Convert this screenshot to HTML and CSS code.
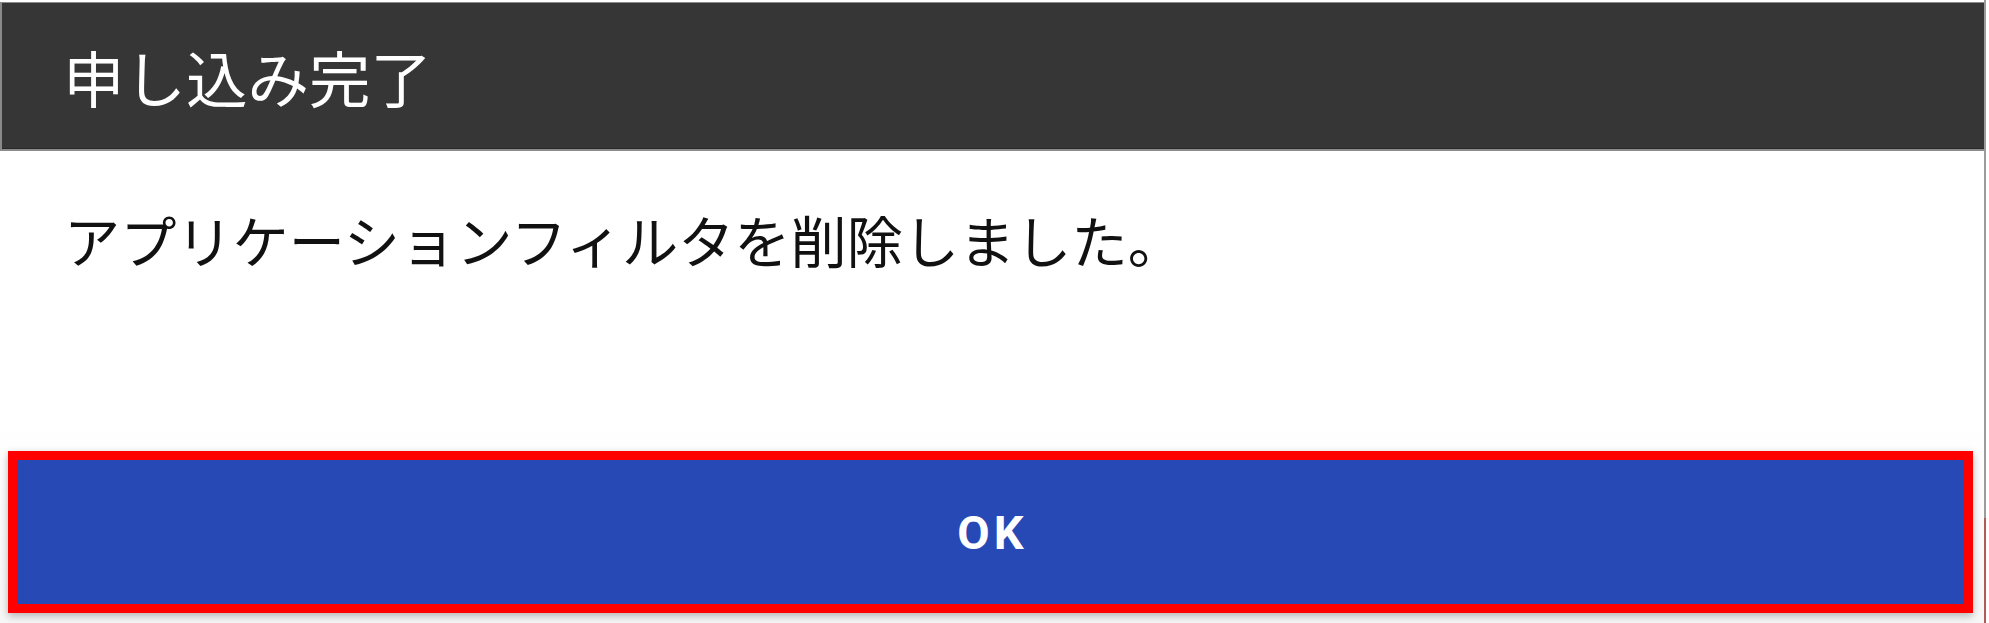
FILE: index.html
```html
<!DOCTYPE html>
<html lang="ja">
<head>
<meta charset="utf-8">
<title>申し込み完了</title>
<link rel="stylesheet" href="styles.css">
</head>
<body>
<div class="dialog">
  <header class="dialog-header">
    <h1 class="dialog-title">申し込み完了</h1>
  </header>
  <main class="dialog-body">
    <p class="message">アプリケーションフィルタを削除しました。</p>
  </main>
  <footer class="dialog-footer">
    <button class="ok-button" type="button">OK</button>
  </footer>
</div>
</body>
</html>
```

FILE: styles.css
```css
html, body {
  margin: 0;
  padding: 0;
  background: #ffffff;
}

body {
  width: 1989px;
  height: 623px;
  overflow: hidden;
  font-family: "Noto Sans CJK JP", "Noto Sans", sans-serif;
}

.dialog {
  box-sizing: border-box;
  width: 1986px;
  height: 623px;
  padding-top: 2px;
  display: flex;
  flex-direction: column;
  border-right: 2px solid #9a9a9a;
  border-image: linear-gradient(to bottom, #9c9c9c 0, #9c9c9c 517px, #b25a5a 517px, #b25a5a 100%) 1;
  background: #ffffff;
}

.dialog-header {
  background: #363636;
  border-top: 1px solid #8a8a8a;
  border-left: 2px solid #8a8a8a;
  border-bottom: 2px solid #8c8c8c;
  box-shadow: inset 0 -1px 0 #2a2a2a;
  padding: 43px 0 41px 61px;
}

.dialog-title {
  margin: 0;
  font-size: 61.5px;
  line-height: 1;
  font-weight: 400;
  color: #ffffff;
  letter-spacing: 0;
}

.dialog-body {
  flex: 1;
  padding: 60px 0 0 64px;
}

.message {
  margin: 0;
  font-size: 56.2px;
  line-height: 1;
  font-weight: 400;
  color: #111111;
}

.dialog-footer {
  padding: 26px 11px 10px 8px;
  background: linear-gradient(to bottom, rgba(240, 240, 240, 0) 0, #f7f7f7 100%);
}

.ok-button {
  display: flex;
  align-items: center;
  justify-content: center;
  box-sizing: border-box;
  width: 100%;
  height: 162px;
  margin: 0;
  padding: 0 0 0 4px;
  border: 9px solid #ff0000;
  background: #2749b6;
  box-shadow: 0 3px 8px rgba(0, 0, 0, 0.28);
  color: #ffffff;
  font-family: Roboto, "Noto Sans", sans-serif;
  font-weight: 700;
  font-size: 47px;
  letter-spacing: 4px;
  line-height: 1;
  cursor: pointer;
}
```
